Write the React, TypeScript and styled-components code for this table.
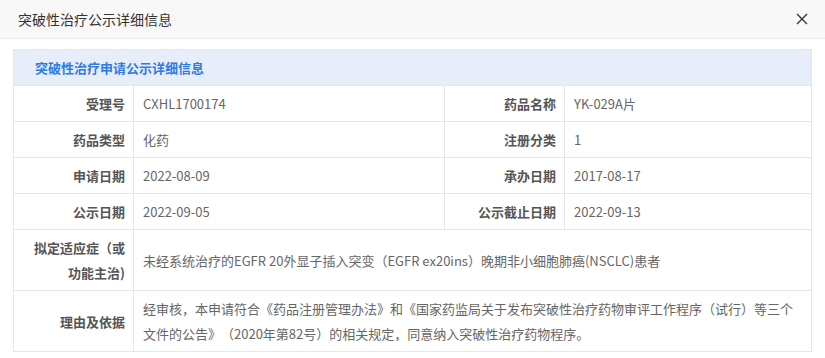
import styled, { createGlobalStyle } from 'styled-components';

const GlobalStyle = createGlobalStyle`
  html, body {
    margin: 0;
    padding: 0;
    background: #ffffff;
    font-family: "Noto Sans CJK SC", "Noto Sans", sans-serif;
    text-spacing-trim: space-all;
  }
  * {
    box-sizing: border-box;
  }
`;

type Field = { label: string; value: string };

const pairs: [Field, Field][] = [
  [
    { label: '受理号', value: 'CXHL1700174' },
    { label: '药品名称', value: 'YK-029A片' },
  ],
  [
    { label: '药品类型', value: '化药' },
    { label: '注册分类', value: '1' },
  ],
  [
    { label: '申请日期', value: '2022-08-09' },
    { label: '承办日期', value: '2017-08-17' },
  ],
  [
    { label: '公示日期', value: '2022-09-05' },
    { label: '公示截止日期', value: '2022-09-13' },
  ],
];

const wide: Field[] = [
  {
    label: '拟定适应症（或功能主治)',
    value:
      '未经系统治疗的EGFR 20外显子插入突变（EGFR ex20ins）晚期非小细胞肺癌(NSCLC)患者',
  },
  {
    label: '理由及依据',
    value:
      '经审核，本申请符合《药品注册管理办法》和《国家药监局关于发布突破性治疗药物审评工作程序（试行）等三个文件的公告》（2020年第82号）的相关规定，同意纳入突破性治疗药物程序。',
  },
];

export default function App() {
  return (
    <>
      <GlobalStyle />
      <Dialog>
        <TitleBar>
          <Title>突破性治疗公示详细信息</Title>
          <CloseButton aria-label="关闭">
            <svg width="12" height="12" viewBox="0 0 12 12">
              <path
                d="M1 1 L11 11 M11 1 L1 11"
                stroke="#333"
                strokeWidth="1.4"
                fill="none"
              />
            </svg>
          </CloseButton>
        </TitleBar>
        <Body>
          <Table>
            <colgroup>
              <LabelCol />
              <ValueCol />
              <LabelCol />
              <col />
            </colgroup>
            <tbody>
              <tr>
                <HeadCell colSpan={4}>突破性治疗申请公示详细信息</HeadCell>
              </tr>
              {pairs.map(([a, b]) => (
                <tr key={a.label}>
                  <Label>{a.label}</Label>
                  <Value>{a.value}</Value>
                  <Label>{b.label}</Label>
                  <Value>{b.value}</Value>
                </tr>
              ))}
              {wide.map((f) => (
                <tr key={f.label}>
                  <Label $tall>{f.label}</Label>
                  <Value colSpan={3} $tall>
                    {f.value}
                  </Value>
                </tr>
              ))}
            </tbody>
          </Table>
        </Body>
      </Dialog>
    </>
  );
}

const Dialog = styled.div`
  width: 825px;
  height: 358px;
  overflow: hidden;
  background: #ffffff;
`;

const TitleBar = styled.div`
  display: flex;
  align-items: center;
  justify-content: space-between;
  height: 39px;
  padding: 0 15px 0 18px;
  background: #f8f8f8;
  border-bottom: 1px solid #ebebeb;
`;

const Title = styled.div`
  font-size: 14px;
  color: #333333;
  line-height: 38px;
`;

const CloseButton = styled.button`
  display: flex;
  align-items: center;
  justify-content: center;
  width: 16px;
  height: 16px;
  padding: 0;
  border: none;
  background: transparent;
  cursor: pointer;
`;

const Body = styled.div`
  padding: 10px 13px;
`;

const Table = styled.table`
  width: 799px;
  border-collapse: collapse;
  table-layout: fixed;
`;

const LabelCol = styled.col`
  width: 120px;
`;

const ValueCol = styled.col`
  width: 311px;
`;

const HeadCell = styled.td`
  height: 36px;
  padding: 0 0 0 21px;
  background: #e7eef9;
  border: 1px solid #e3e6ea;
  color: #2f7be4;
  font-size: 13px;
  font-weight: bold;
  line-height: 20px;
`;

const Label = styled.td<{ $tall?: boolean }>`
  height: ${(p) => (p.$tall ? 61 : 36)}px;
  padding: ${(p) => (p.$tall ? '5px 8px 5px 14px' : '0 8px 0 14px')};
  border: 1px solid #e6e6e6;
  text-align: right;
  color: #555555;
  font-size: 13px;
  font-weight: bold;
  line-height: 25px;
`;

const Value = styled.td<{ $tall?: boolean }>`
  height: ${(p) => (p.$tall ? 61 : 36)}px;
  padding: ${(p) => (p.$tall ? '5px 10px 5px 9px' : '0 10px 0 9px')};
  border: 1px solid #e6e6e6;
  color: #666666;
  font-size: 13px;
  line-height: 25px;
`;
